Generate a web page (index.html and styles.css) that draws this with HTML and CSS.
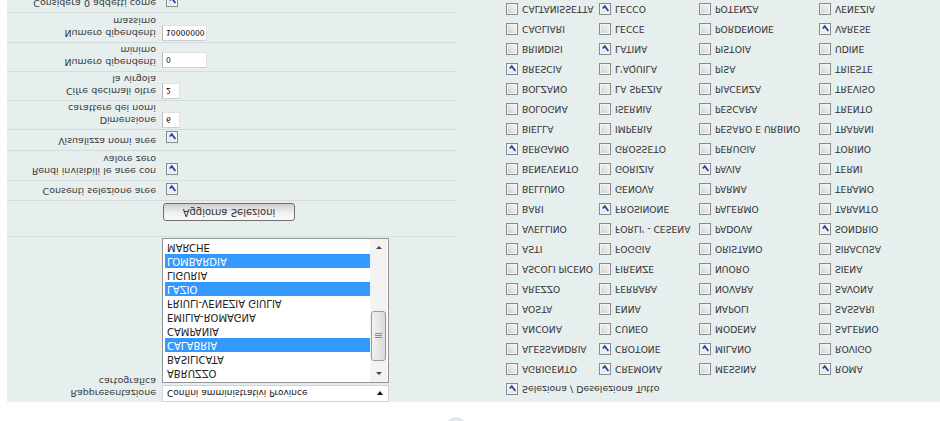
FILE: index.html
```html
<!DOCTYPE html>
<html lang="it">
<head>
<meta charset="utf-8">
<title>Selezione aree</title>
<link rel="stylesheet" href="styles.css">
</head>
<body>
<div class="page">
  <div class="top">
    <svg class="logo" width="70" height="19" viewBox="0 0 70 19"><ellipse cx="11" cy="-5" rx="10" ry="9" fill="#c3cfe2" opacity="0.5"/></svg>
  </div>
  <div class="panel">
    <div class="form">
      <div class="row row-map">
        <div class="lbl">Rappresentazione<br>cartografica</div>
        <div class="val">
          <div class="select"><span>Confini amministrativi Province</span><span class="dd"></span></div>
          <div class="listbox">
            <div class="items">
              <div class="it">ABRUZZO</div>
              <div class="it">BASILICATA</div>
              <div class="it sel">CALABRIA</div>
              <div class="it">CAMPANIA</div>
              <div class="it">EMILIA-ROMAGNA</div>
              <div class="it">FRIULI-VENEZIA GIULIA</div>
              <div class="it sel">LAZIO</div>
              <div class="it">LIGURIA</div>
              <div class="it sel">LOMBARDIA</div>
              <div class="it">MARCHE</div>
            </div>
            <div class="sb">
              <div class="sb-btn"><span class="tri-up"></span></div>
              <div class="thumb"><span class="grip"></span></div>
              <div class="sb-fill"></div>
              <div class="sb-btn"><span class="tri-down"></span></div>
            </div>
          </div>
        </div>
      </div>
      <div class="row row-btn">
        <div class="lbl"></div>
        <div class="val"><button class="btn" type="button">Aggiorna Selezioni</button></div>
      </div>
      <div class="row row-s">
        <div class="lbl">Consenti selezione aree</div>
        <div class="val"><span class="cb on lcb"><svg viewBox="0 0 10 10"><path d="M2 5 L4.2 7.6 L8.2 2.2"/></svg></span></div>
      </div>
      <div class="row row-d29">
        <div class="lbl">Rendi invisibili le aree con<br>valore zero</div>
        <div class="val"><span class="cb on lcb"><svg viewBox="0 0 10 10"><path d="M2 5 L4.2 7.6 L8.2 2.2"/></svg></span></div>
      </div>
      <div class="row row-s20">
        <div class="lbl">Visualizza nomi aree</div>
        <div class="val"><span class="cb on lcb lcb2"><svg viewBox="0 0 10 10"><path d="M2 5 L4.2 7.6 L8.2 2.2"/></svg></span></div>
      </div>
      <div class="row row-d28">
        <div class="lbl">Dimensione<br>carattere dei nomi</div>
        <div class="val"><input class="txt short" type="text" value="6"></div>
      </div>
      <div class="row row-d28">
        <div class="lbl">Cifre decimali oltre<br>la virgola</div>
        <div class="val"><input class="txt short" type="text" value="2"></div>
      </div>
      <div class="row row-d28">
        <div class="lbl">Numero dipendenti<br>minimo</div>
        <div class="val"><input class="txt long m2" type="text" value="0"></div>
      </div>
      <div class="row row-d29">
        <div class="lbl">Numero dipendenti<br>massimo</div>
        <div class="val"><input class="txt long" type="text" value="10000000"></div>
      </div>
      <div class="row row-last">
        <div class="lbl">Considera 0 addetti come</div>
        <div class="val"><span class="cb on lcb"><svg viewBox="0 0 10 10"><path d="M2 5 L4.2 7.6 L8.2 2.2"/></svg></span></div>
      </div>
    </div>

    <div class="prov">
      <div class="p"><span class="cb on"><svg viewBox="0 0 10 10"><path d="M2 5 L4.2 7.6 L8.2 2.2"/></svg></span><span class="all">Seleziona / Deseleziona Tutto</span></div>
      <div class="grid">
        <div class="p"><span class="cb"></span>AGRIGENTO</div>
        <div class="p"><span class="cb on"><svg viewBox="0 0 10 10"><path d="M2 5 L4.2 7.6 L8.2 2.2"/></svg></span>CREMONA</div>
        <div class="p"><span class="cb"></span>MESSINA</div>
        <div class="p"><span class="cb on"><svg viewBox="0 0 10 10"><path d="M2 5 L4.2 7.6 L8.2 2.2"/></svg></span>ROMA</div>

        <div class="p"><span class="cb"></span>ALESSANDRIA</div>
        <div class="p"><span class="cb on"><svg viewBox="0 0 10 10"><path d="M2 5 L4.2 7.6 L8.2 2.2"/></svg></span>CROTONE</div>
        <div class="p"><span class="cb on"><svg viewBox="0 0 10 10"><path d="M2 5 L4.2 7.6 L8.2 2.2"/></svg></span>MILANO</div>
        <div class="p"><span class="cb"></span>ROVIGO</div>

        <div class="p"><span class="cb"></span>ANCONA</div>
        <div class="p"><span class="cb"></span>CUNEO</div>
        <div class="p"><span class="cb"></span>MODENA</div>
        <div class="p"><span class="cb"></span>SALERNO</div>

        <div class="p"><span class="cb"></span>AOSTA</div>
        <div class="p"><span class="cb"></span>ENNA</div>
        <div class="p"><span class="cb"></span>NAPOLI</div>
        <div class="p"><span class="cb"></span>SASSARI</div>

        <div class="p"><span class="cb"></span>AREZZO</div>
        <div class="p"><span class="cb"></span>FERRARA</div>
        <div class="p"><span class="cb"></span>NOVARA</div>
        <div class="p"><span class="cb"></span>SAVONA</div>

        <div class="p"><span class="cb"></span>ASCOLI PICENO</div>
        <div class="p"><span class="cb"></span>FIRENZE</div>
        <div class="p"><span class="cb"></span>NUORO</div>
        <div class="p"><span class="cb"></span>SIENA</div>

        <div class="p"><span class="cb"></span>ASTI</div>
        <div class="p"><span class="cb"></span>FOGGIA</div>
        <div class="p"><span class="cb"></span>ORISTANO</div>
        <div class="p"><span class="cb"></span>SIRACUSA</div>

        <div class="p"><span class="cb"></span>AVELLINO</div>
        <div class="p"><span class="cb"></span>FORLI' - CESENA</div>
        <div class="p"><span class="cb"></span>PADOVA</div>
        <div class="p"><span class="cb on"><svg viewBox="0 0 10 10"><path d="M2 5 L4.2 7.6 L8.2 2.2"/></svg></span>SONDRIO</div>

        <div class="p"><span class="cb"></span>BARI</div>
        <div class="p"><span class="cb on"><svg viewBox="0 0 10 10"><path d="M2 5 L4.2 7.6 L8.2 2.2"/></svg></span>FROSINONE</div>
        <div class="p"><span class="cb"></span>PALERMO</div>
        <div class="p"><span class="cb"></span>TARANTO</div>

        <div class="p"><span class="cb"></span>BELLUNO</div>
        <div class="p"><span class="cb"></span>GENOVA</div>
        <div class="p"><span class="cb"></span>PARMA</div>
        <div class="p"><span class="cb"></span>TERAMO</div>

        <div class="p"><span class="cb"></span>BENEVENTO</div>
        <div class="p"><span class="cb"></span>GORIZIA</div>
        <div class="p"><span class="cb on"><svg viewBox="0 0 10 10"><path d="M2 5 L4.2 7.6 L8.2 2.2"/></svg></span>PAVIA</div>
        <div class="p"><span class="cb"></span>TERNI</div>

        <div class="p"><span class="cb on"><svg viewBox="0 0 10 10"><path d="M2 5 L4.2 7.6 L8.2 2.2"/></svg></span>BERGAMO</div>
        <div class="p"><span class="cb"></span>GROSSETO</div>
        <div class="p"><span class="cb"></span>PERUGIA</div>
        <div class="p"><span class="cb"></span>TORINO</div>

        <div class="p"><span class="cb"></span>BIELLA</div>
        <div class="p"><span class="cb"></span>IMPERIA</div>
        <div class="p"><span class="cb"></span>PESARO E URBINO</div>
        <div class="p"><span class="cb"></span>TRAPANI</div>

        <div class="p"><span class="cb"></span>BOLOGNA</div>
        <div class="p"><span class="cb"></span>ISERNIA</div>
        <div class="p"><span class="cb"></span>PESCARA</div>
        <div class="p"><span class="cb"></span>TRENTO</div>

        <div class="p"><span class="cb"></span>BOLZANO</div>
        <div class="p"><span class="cb"></span>LA SPEZIA</div>
        <div class="p"><span class="cb"></span>PIACENZA</div>
        <div class="p"><span class="cb"></span>TREVISO</div>

        <div class="p"><span class="cb on"><svg viewBox="0 0 10 10"><path d="M2 5 L4.2 7.6 L8.2 2.2"/></svg></span>BRESCIA</div>
        <div class="p"><span class="cb"></span>L'AQUILA</div>
        <div class="p"><span class="cb"></span>PISA</div>
        <div class="p"><span class="cb"></span>TRIESTE</div>

        <div class="p"><span class="cb"></span>BRINDISI</div>
        <div class="p"><span class="cb on"><svg viewBox="0 0 10 10"><path d="M2 5 L4.2 7.6 L8.2 2.2"/></svg></span>LATINA</div>
        <div class="p"><span class="cb"></span>PISTOIA</div>
        <div class="p"><span class="cb"></span>UDINE</div>

        <div class="p"><span class="cb"></span>CAGLIARI</div>
        <div class="p"><span class="cb"></span>LECCE</div>
        <div class="p"><span class="cb"></span>PORDENONE</div>
        <div class="p"><span class="cb on"><svg viewBox="0 0 10 10"><path d="M2 5 L4.2 7.6 L8.2 2.2"/></svg></span>VARESE</div>

        <div class="p"><span class="cb"></span>CALTANISSETTA</div>
        <div class="p"><span class="cb on"><svg viewBox="0 0 10 10"><path d="M2 5 L4.2 7.6 L8.2 2.2"/></svg></span>LECCO</div>
        <div class="p"><span class="cb"></span>POTENZA</div>
        <div class="p"><span class="cb"></span>VENEZIA</div>
      </div>
    </div>
  </div>
</div>
</body>
</html>
```
FILE: styles.css
```css
html, body {
  margin: 0;
  padding: 0;
  background: #ffffff;
}

.page {
  width: 940px;
  height: 421px;
  overflow: hidden;
  transform: scaleY(-1);
  font-family: "DejaVu Sans", Verdana, sans-serif;
  color: #3a3a3a;
}

.top {
  height: 19px;
  display: flex;
  padding-left: 445px;
}

.logo {
  display: block;
}

.panel {
  margin-left: 7px;
  height: 402px;
  background: #e6eeee;
  display: flex;
  align-items: flex-start;
}

/* left form */
.form {
  width: 450px;
  flex: none;
}

.row {
  display: flex;
  border-bottom: 1px solid #d4dcdc;
}

.row-map { height: 165px; }
.row-btn { height: 35px; }
.row-s { height: 19px; }
.row-s20 { height: 20px; }
.row-d28 { height: 28px; }
.row-d29 { height: 29px; }
.row-last { height: 30px; border-bottom: 0; }

.lbl {
  width: 149px;
  flex: none;
  padding: 3px 4px 0 0;
  text-align: right;
  font-size: 9.5px;
  line-height: 12px;
  white-space: nowrap;
}

.val {
  flex: 1;
  padding-left: 2px;
  display: flex;
  flex-direction: column;
  align-items: flex-start;
}

/* select + listbox */
.select {
  width: 227px;
  height: 17px;
  box-sizing: border-box;
  border: 1px solid #cfd3d3;
  background: #ffffff;
  display: flex;
  align-items: center;
  justify-content: space-between;
  padding: 0 4px;
  font-size: 9px;
  color: #111111;
}

.dd {
  width: 0;
  height: 0;
  border-left: 3.5px solid transparent;
  border-right: 3.5px solid transparent;
  border-top: 4px solid #111111;
  margin-right: 1px;
}

.listbox {
  margin-top: 2px;
  width: 227px;
  height: 145px;
  box-sizing: border-box;
  border: 1px solid #8f9494;
  background: #ffffff;
  display: flex;
  padding: 2px 1px 0 2px;
  overflow: hidden;
}

.items {
  width: 205px;
  flex: none;
  overflow: hidden;
}

.it {
  height: 14px;
  line-height: 14px;
  padding-left: 2px;
  font-size: 10px;
  color: #222222;
  white-space: nowrap;
}

.it.sel {
  background: #3399ff;
  color: #ffffff;
}

.sb {
  width: 17px;
  flex: none;
  display: flex;
  flex-direction: column;
  background: #f3f3f3;
  margin-top: -2px;
}

.sb-btn {
  height: 17px;
  display: flex;
  align-items: center;
  justify-content: center;
}

.tri-up {
  width: 0;
  height: 0;
  border-left: 3px solid transparent;
  border-right: 3px solid transparent;
  border-bottom: 3px solid #444444;
}

.tri-down {
  width: 0;
  height: 0;
  border-left: 3px solid transparent;
  border-right: 3px solid transparent;
  border-top: 3px solid #444444;
}

.thumb {
  margin: 4px 1px 0 1px;
  height: 50px;
  box-sizing: border-box;
  border: 1px solid #9a9a9a;
  border-radius: 3px;
  background: linear-gradient(90deg, #f2f2f2, #dadada);
  display: flex;
  align-items: center;
  justify-content: center;
}

.grip {
  width: 7px;
  height: 5px;
  box-sizing: border-box;
  border-top: 1px solid #8a8a8a;
  border-bottom: 1px solid #8a8a8a;
  background: linear-gradient(#8a8a8a, #8a8a8a) center / 7px 1px no-repeat;
}

.sb-fill {
  flex: 1;
}

/* button */
.btn {
  margin: 15px 0 0 1px;
  width: 132px;
  height: 18px;
  box-sizing: border-box;
  border: 1px solid #6f6f6f;
  border-radius: 3px;
  background: linear-gradient(#fbfbfb, #f0f0f0 45%, #cfcfcf);
  font-family: "DejaVu Sans", Verdana, sans-serif;
  font-size: 10px;
  line-height: 16px;
  color: #333333;
  padding: 0;
  white-space: nowrap;
}

/* inputs */
.txt {
  margin-top: 1px;
  height: 16px;
  box-sizing: border-box;
  border: 1px solid #e0e0e0;
  border-left-color: #b5b5b5;
  border-top-color: #cfcfcf;
  background: #ffffff;
  padding: 0 0 0 3px;
  font-family: "DejaVu Sans", Verdana, sans-serif;
  font-size: 7.6px;
  color: #000000;
  outline: none;
}

.txt.short { width: 18px; }
.txt.long { width: 45px; }
.txt.m2 { margin-top: 3px; }

/* checkboxes */
.cb {
  width: 12px;
  height: 12px;
  flex: none;
  box-sizing: border-box;
  border: 1px solid #8a8a8a;
  box-shadow: inset 0 0 0 1px #f4f4f4;
  background: linear-gradient(135deg, #cdd1d5, #f9f9f9);
  display: inline-flex;
  align-items: center;
  justify-content: center;
}

.cb.on {
  background: linear-gradient(135deg, #dfe3e8, #ffffff);
}

.cb svg {
  width: 9px;
  height: 9px;
  fill: none;
  stroke: #22449a;
  stroke-width: 2;
}

.lcb {
  margin: 5px 0 0 4px;
}

.lcb2 {
  margin-top: 7px;
}

/* provinces */
.prov {
  margin-left: 49px;
  padding-top: 2px;
}

.grid {
  display: grid;
  grid-template-columns: 93px 100px 120px 120px;
}

.p {
  height: 20px;
  display: flex;
  align-items: center;
  gap: 4px;
  font-size: 9.2px;
  color: #333333;
  white-space: nowrap;
}

.p .cb {
  margin-top: 2px;
}

.all {
  font-size: 9.4px;
}
```
